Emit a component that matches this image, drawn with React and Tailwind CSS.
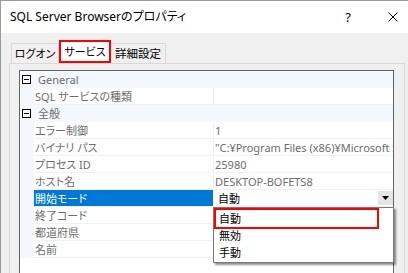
import React from "react";

const rows = [
  { cat: "General" },
  { name: "SQL サービスの種類", value: "" },
  { cat: "全般" },
  { name: "エラー制御", value: "1" },
  { name: "バイナリ パス", value: "\"C:¥Program Files (x86)¥Microsoft SQL Server¥90¥Shared¥sqlbrowser.exe\"" },
  { name: "プロセス ID", value: "25980" },
  { name: "ホスト名", value: "DESKTOP-BOFETS8" },
  { name: "開始モード", value: "自動", selected: true },
  { name: "終了コード", value: "" },
  { name: "都道府県", value: "" },
  { name: "名前", value: "" },
];

function MinusBox() {
  return (
    <div className="relative ml-[2px] h-[9px] w-[9px] border border-black bg-white">
      <div className="absolute left-[1px] top-[3px] h-px w-[5px] bg-black" />
    </div>
  );
}

function Row({ r }) {
  if (r.cat) {
    return (
      <div className="flex h-[17px] items-center bg-[#f4f7fc]">
        <div className="flex w-[14px] items-center">
          <MinusBox />
        </div>
        <span className="pl-[4px] text-[#6d6d6d]">{r.cat}</span>
      </div>
    );
  }
  return (
    <div className="flex h-[17px]">
      <div className="w-[14px] bg-[#f4f7fc]" />
      <div
        className={
          r.selected
            ? "flex w-[179px] items-center border-b border-[#eef1f6] bg-[#0078d7] pl-[1px] text-white"
            : "flex w-[179px] items-center border-b border-[#eef1f6] pl-[1px] text-[#6d6d6d]"
        }
      >
        <span className="whitespace-nowrap">{r.name}</span>
      </div>
      <div className="w-px bg-[#eef1f6]" />
      <div className="flex min-w-0 flex-1 items-center overflow-hidden border-b border-[#eef1f6]">
        <span
          className={
            r.selected
              ? "flex-1 whitespace-nowrap pl-[4px] text-black"
              : "flex-1 whitespace-nowrap pl-[1px] text-[#6d6d6d]"
          }
        >
          {r.value}
        </span>
        {r.selected && (
          <div className="flex h-[14px] w-[15px] shrink-0 items-center justify-center bg-[#e5e5e5]">
            <svg width="7" height="4" viewBox="0 0 7 4">
              <path d="M0 0H7L3.5 4Z" fill="#000" />
            </svg>
          </div>
        )}
      </div>
    </div>
  );
}

export default function App() {
  return (
    <div className="relative h-[273px] w-[408px] overflow-hidden border-l border-[#9a9a9a] bg-[#f0f0f0] font-['Noto_Sans','Noto_Sans_CJK_JP',sans-serif] text-[11px] leading-none [font-feature-settings:'palt']">
      <div className="flex h-[33px] items-center border-t border-[#9a9a9a] bg-white pl-[9px]">
        <span className="flex-1 text-[12px] text-black">SQL Server Browserのプロパティ</span>
        <span className="mr-[37px] text-[13px] text-black">?</span>
        <svg className="mr-[10px]" width="10" height="10" viewBox="0 0 10 10">
          <path d="M0.5 0.5L9.5 9.5M9.5 0.5L0.5 9.5" stroke="#000" strokeWidth="1" />
        </svg>
      </div>
      <div className="flex h-[30px] items-end pl-[10px]">
        <div className="flex h-[20px] w-[48px] items-center justify-center border border-b-0 border-[#d9d9d9] bg-[#f0f0f0] text-[11px] text-black">
          ログオン
        </div>
        <div className="flex h-[23px] w-[52px] items-center justify-center border-2 border-[#ff0000] bg-white text-[11px] text-black">
          サービス
        </div>
        <div className="flex h-[20px] w-[55px] items-center justify-center border border-b-0 border-l-0 border-[#d9d9d9] bg-[#f0f0f0] text-[11.5px] text-black">
          詳細設定
        </div>
      </div>
      <div className="ml-[8px] mr-[3px] h-[220px] border border-[#d9d9d9] bg-[#f0f0f0] pl-[9px] pr-[10px] pt-[6px]">
        <div className="h-full overflow-hidden border border-[#646464] bg-white">
          {rows.map((r, i) => (
            <Row key={i} r={r} />
          ))}
        </div>
      </div>

      <div className="absolute left-[212px] top-[207px] h-[56px] w-[181px] border border-[#7a7a7a] bg-white pt-[2px] shadow-[2px_2px_2px_rgba(0,0,0,0.45)]">
        {["自動", "無効", "手動"].map((t) => (
          <div key={t} className="flex h-[17px] items-center pl-[5px] text-black">
            {t}
          </div>
        ))}
      </div>
      <div className="absolute left-[213px] top-[208px] h-[21px] w-[165px] border-2 border-[#ff0000]" />
    </div>
  );
}
